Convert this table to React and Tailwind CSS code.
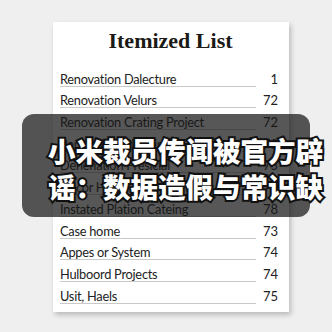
import React from 'react';

const items = [
  { name: 'Renovation Dalecture', value: 1 },
  { name: 'Renovation Velurs', value: 72 },
  { name: 'Renovation Crating Project', value: 72 },
  { name: 'Renovation Planning', value: 73 },
  { name: 'Denenation Presicial', value: 75 },
  { name: 'Decor Home Hor', value: 76 },
  { name: 'Instated Plation Cateing', value: 78 },
  { name: 'Case home', value: 73 },
  { name: 'Appes or System', value: 74 },
  { name: 'Hulboord Projects', value: 74 },
  { name: 'Usit, Haels', value: 75 },
];

export default function App() {
  return (
    <div className="relative w-[332px] h-[332px] overflow-hidden bg-[#efefef] pl-[53px] pt-[22px]">
      <div className="w-[236px] h-[290px] bg-white shadow-[2px_3px_5px_rgba(0,0,0,0.22)] pt-[5px] pl-[7px] pr-[11px]">
        <h1 className="text-center text-[22px] leading-[28px] font-bold text-[#1c1a16] mb-[10px] pl-[3px] font-['Liberation_Serif',serif]">
          Itemized List
        </h1>
        <ul className="font-['Lato',sans-serif] text-[12.8px] tracking-[-0.25px] text-[#222]">
          {items.map((it, i) => (
            <li key={i} className="flex">
              <span className="flex-1 pt-[6.7px] leading-[14px] border-b border-[#c9c9c9] whitespace-nowrap">
                {it.name}
              </span>
              <span className="w-[22px] pt-[6.7px] leading-[14px] text-right text-[13px] tracking-normal">{it.value}</span>
            </li>
          ))}
        </ul>
      </div>

      <div className="absolute left-[22px] top-[114px] w-[288px] h-[103px] rounded-[12px] bg-[rgba(22,22,22,0.72)]">
        <div className="pl-[26px] pt-[18px] whitespace-nowrap text-white text-[27.5px] leading-[36px] font-black font-['Noto_Sans_CJK_SC',sans-serif] [-webkit-text-stroke:4px_#111] [paint-order:stroke_fill]">
          <div>小米裁员传闻被官方辟</div>
          <div>谣：数据造假与常识缺</div>
        </div>
      </div>
    </div>
  );
}
